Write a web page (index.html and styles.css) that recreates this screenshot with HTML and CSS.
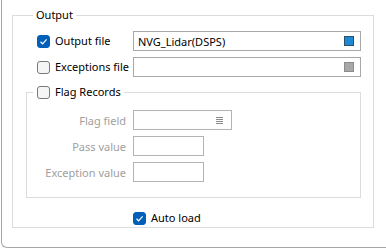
FILE: index.html
```html
<!DOCTYPE html>
<html lang="en">
<head>
    <meta charset="UTF-8">
    <title>Output</title>
    <link rel="stylesheet" href="styles.css">
</head>
<body>
    <div class="frame">
        <fieldset class="group">
            <legend class="group-title">Output</legend>

            <div class="file-row">
                <label class="check">
                    <span class="box checked">
                        <svg viewBox="0 0 13 13" width="13" height="13"><path d="M3.5 6.8 L5.6 8.8 L9.6 4.4" fill="none" stroke="#fff" stroke-width="1.2"/></svg>
                    </span>
                    Output file
                </label>
                <div class="field">
                    <span class="value">NVG_Lidar(DSPS)</span>
                    <span class="swatch blue"></span>
                </div>
            </div>

            <div class="file-row">
                <label class="check">
                    <span class="box"></span>
                    Exceptions file
                </label>
                <div class="field">
                    <span class="value"></span>
                    <span class="swatch grey"></span>
                </div>
            </div>

            <!-- Flag records (disabled until ticked) -->
            <fieldset class="group inner">
                <legend class="check legend-check">
                    <span class="box"></span>
                    Flag Records
                </legend>

                <div class="form-row">
                    <span class="label">Flag field</span>
                    <div class="field disabled wide">
                        <span class="value"></span>
                        <span class="list-icon">
                            <svg viewBox="0 0 7 7" width="7" height="7"><path d="M0 0.5H7M0 2.5H7M0 4.5H7M0 6.5H7" stroke="#8a8a8a" stroke-width="1"/></svg>
                        </span>
                    </div>
                </div>
                <div class="form-row">
                    <span class="label">Pass value</span>
                    <div class="field disabled short"></div>
                </div>
                <div class="form-row">
                    <span class="label">Exception value</span>
                    <div class="field disabled short"></div>
                </div>
            </fieldset>

            <div class="auto-row">
                <label class="check">
                    <span class="box checked">
                        <svg viewBox="0 0 13 13" width="13" height="13"><path d="M3.5 6.8 L5.6 8.8 L9.6 4.4" fill="none" stroke="#fff" stroke-width="1.2"/></svg>
                    </span>
                    Auto load
                </label>
            </div>
        </fieldset>
    </div>
</body>
</html>
```

FILE: styles.css
```css
body {
    margin: 0;
    background: #ffffff;
    font-family: "Noto Sans", "Open Sans", sans-serif;
    font-size: 11px;
    color: #000000;
}

.frame {
    margin-left: 1px;
    height: 248px;
    border-left: 1px solid #a6a6a6;
    border-bottom: 1px solid #a6a6a6;
    border-bottom-left-radius: 6px;
    padding: 7px 0 0 10px;
    box-sizing: border-box;
}

/* Group boxes */
.group {
    margin: 0;
    width: 362px;
    height: 221px;
    box-sizing: border-box;
    border: 1px solid #dcdcdc;
    padding: 8px 0 0 13px;
}

.group-title {
    padding: 0 3px;
    margin-left: 7px;
    line-height: 16px;
    color: #000000;
}

.inner {
    width: 335px;
    height: 114px;
    margin-top: 7px;
    padding: 10px 0 0 0;
}

.legend-check {
    margin-left: 6px;
    padding: 0 3px 0 4px;
}

/* Checkbox */
.check {
    display: flex;
    align-items: center;
    gap: 5px;
    line-height: 16px;
}

.box {
    width: 13px;
    height: 13px;
    box-sizing: border-box;
    border: 1px solid #7a7a7a;
    border-radius: 3px;
    background: #f5f5f5;
    display: flex;
}

.box.checked {
    background: #005fb8;
    border-color: #005fb8;
}

.box.checked svg {
    margin: -1px;
}

/* Text fields */
.file-row {
    display: flex;
    align-items: center;
    height: 20px;
    margin-bottom: 6px;
    padding-left: 11px;
}

.file-row .check {
    width: 96px;
}

.field {
    height: 20px;
    width: 228px;
    box-sizing: border-box;
    border: 1px solid #a8a8a8;
    display: flex;
    align-items: center;
    padding: 0 6px 0 4px;
}

.field .value {
    flex: 1;
}

.swatch {
    width: 10px;
    height: 10px;
    box-sizing: border-box;
}

.swatch.blue {
    background: #1e88d2;
    border: 1px solid #2f4f6c;
}

.swatch.grey {
    background: #a8a8a8;
    border: 1px solid #8c8c8c;
}

.form-row {
    display: flex;
    align-items: center;
    height: 20px;
    margin-bottom: 6px;
}

.label {
    width: 99px;
    text-align: right;
    padding-right: 7px;
    color: #a0a0a0;
}

.field.disabled {
    border-color: #b4b4b4;
}

.field.wide {
    width: 99px;
    padding-right: 8px;
}

.field.short {
    width: 71px;
}

.list-icon {
    display: flex;
}

.auto-row {
    padding-left: 107px;
    margin-top: 12px;
}
```
